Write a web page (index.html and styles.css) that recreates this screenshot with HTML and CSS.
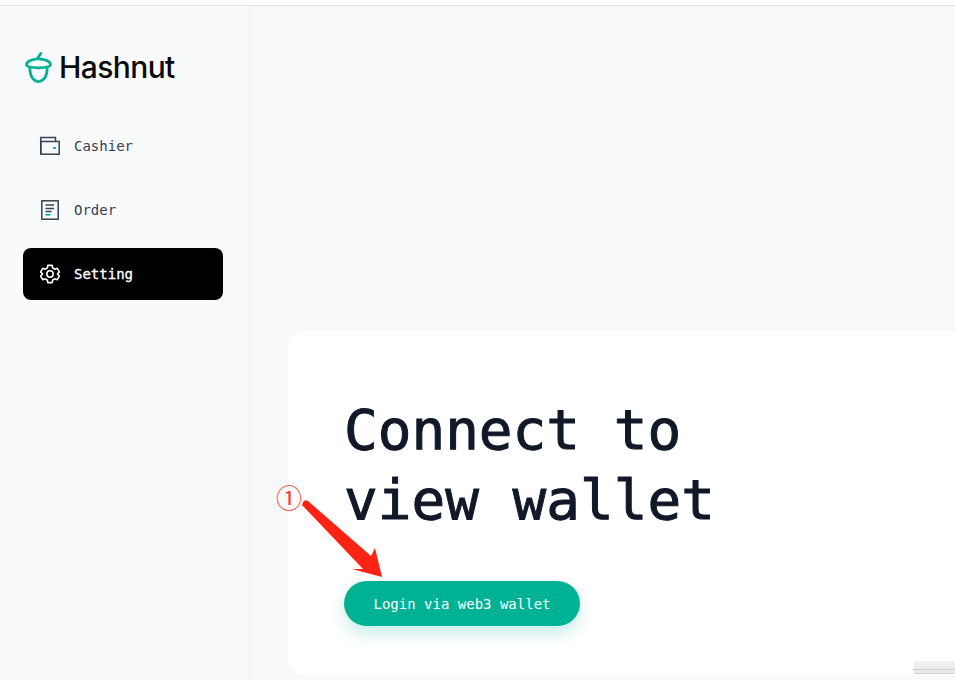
FILE: index.html
```html
<!DOCTYPE html>
<html lang="en">

<head>
    <meta charset="UTF-8">
    <meta name="viewport" content="width=device-width, initial-scale=1.0">
    <title>Hashnut</title>
    <link rel="stylesheet" href="styles.css">
</head>

<body>
    <div class="topbar"></div>
    <div class="app">
        <aside class="sidebar">
            <div class="brand">
                <svg class="brand-icon" width="27" height="33" viewBox="0 0 28 33" fill="none" stroke="#00b294" stroke-width="2.800" stroke-linecap="round" stroke-linejoin="round">
                    <path d="M13 7 L16.500 1.800" />
                    <path d="M14 7.500 C20 7.500 26.500 10 26.500 13.500 C26.500 15.800 22 16.800 14 16.800 C6 16.800 1.500 15.800 1.500 13.500 C1.500 10 8 7.500 14 7.500 Z" />
                    <path d="M5 16.500 C5 23 7 30 14 31.300 C21 30 23 23 23 16.500" />
                </svg>
                <span class="brand-name">Hashnut</span>
            </div>
            <nav class="menu">
                <a class="menu-item">
                    <svg width="20" height="20" viewBox="0 0 20 20" fill="none" stroke="#374151" stroke-width="1.500">
                        <path d="M0.800 17.700 V1.500 H15.500 V5.500" />
                        <rect x="0.800" y="5.500" width="18.400" height="12.700" />
                        <rect x="13" y="11" width="3" height="1.800" fill="#00b294" stroke="none" />
                    </svg>
                    <span>Cashier</span>
                </a>
                <a class="menu-item">
                    <svg width="20" height="20" viewBox="0 0 20 20" fill="none" stroke="#374151" stroke-width="1.500">
                        <rect x="1.800" y="0.800" width="16.400" height="18.400" />
                        <path d="M5.500 5 H14 M5.500 8.500 H14 M5.500 11.500 H11.500" stroke-width="1.300" />
                        <path d="M5.500 14.800 H10.500" stroke="#00b294" stroke-width="1.600" />
                    </svg>
                    <span>Order</span>
                </a>
                <a class="menu-item active">
                    <svg width="20" height="20" viewBox="1 1 22 22" fill="none" stroke="#fff" stroke-width="1.700" stroke-linejoin="round">
                        <path d="M9.600 2.500 H14.400 L15 5.400 L17.200 6.700 L20 5.700 L22.400 9.800 L20.200 11.800 V12.200 L22.400 14.200 L20 18.300 L17.200 17.300 L15 18.600 L14.400 21.500 H9.600 L9 18.600 L6.800 17.300 L4 18.300 L1.600 14.200 L3.800 12.200 V11.800 L1.600 9.800 L4 5.700 L6.800 6.700 L9 5.400 Z" />
                        <circle cx="12" cy="12" r="3.500" />
                    </svg>
                    <span>Setting</span>
                </a>
            </nav>
        </aside>
        <main class="content">
            <section class="card">
                <h1 class="card-title">Connect to<br>view wallet</h1>
                <button class="login-btn">Login via web3 wallet</button>
                <span class="step-mark">①</span>
                <svg class="step-arrow" width="82" height="80" viewBox="0 0 82 80">
                    <path d="M1 3 Q3 0 6 2 L69 57 L73 49 L80 78 L50 70 L61 70 L0 6 Z" fill="#ff2313" />
                </svg>
            </section>
        </main>
    </div>
    <div class="corner-tab"></div>
</body>

</html>
```

FILE: styles.css
```css
html,
body {
    margin: 0;
    height: 100%;
    overflow: hidden;
    background: #fff;
}

body {
    font-family: "DejaVu Sans Mono", "Liberation Mono", monospace;
}

.topbar {
    height: 5px;
    background: #fff;
    border-bottom: 1px solid #e0e2e6;
}

.app {
    display: flex;
    height: 674px;
    background: #f8f9fb;
}

.sidebar {
    flex: none;
    width: 248px;
    padding: 0 25px 0 23px;
    box-sizing: border-box;
    background: #f9fafc;
    box-shadow: 1px 0 6px rgba(230, 232, 236, 0.5);
}

.brand {
    display: flex;
    align-items: center;
    gap: 7px;
    height: 36px;
    margin-top: 43px;
    padding-left: 2px;
}

.brand-name {
    font-family: Inter, "Liberation Sans", sans-serif;
    font-size: 30px;
    font-weight: 550;
    letter-spacing: -0.6px;
    color: #0a0a0a;
}

.menu {
    display: flex;
    flex-direction: column;
    gap: 12px;
    margin-top: 35px;
}

.menu-item {
    display: flex;
    align-items: center;
    gap: 14px;
    height: 52px;
    padding-left: 17px;
    border-radius: 8px;
    font-size: 14px;
    color: #374151;
}

.menu-item.active {
    background: #000;
    color: #fff;
    -webkit-text-stroke: 0.3px #fff;
}

.content {
    flex: 1;
    min-width: 0;
    padding: 325px 0 0 40px;
    overflow: hidden;
}

.card {
    position: relative;
    width: 800px;
    height: 344px;
    padding: 64px 56px 0;
    box-sizing: border-box;
    background: #fff;
    border-radius: 16px;
}

.card-title {
    margin: 0;
    font-size: 56px;
    font-weight: normal;
    line-height: 70px;
    color: #111827;
    -webkit-text-stroke: 1px #111827;
}

.login-btn {
    display: block;
    width: 236px;
    height: 45px;
    margin-top: 46px;
    border: none;
    border-radius: 23px;
    font-family: inherit;
    font-size: 14px;
    color: #fff;
    background: #00b294;
    box-shadow: 0 8px 16px rgba(0, 178, 148, 0.22);
}

.step-mark {
    position: absolute;
    left: -12px;
    top: 149px;
    font-family: "Noto Sans CJK SC", sans-serif;
    font-size: 26px;
    line-height: 34px;
    color: #ff3b30;
}

.step-arrow {
    position: absolute;
    left: 14px;
    top: 168px;
}

.corner-tab {
    position: absolute;
    right: 0;
    top: 661px;
    width: 41px;
    height: 12px;
    border-radius: 3px 0 0 0;
    background: linear-gradient(#f2f2f2, #e6e6e6);
    border-bottom: 1px solid #d0d0d0;
}

.corner-tab::after {
    content: "";
    position: absolute;
    left: -2px;
    right: 0;
    top: 8px;
    height: 1px;
    background: #cfcfcf;
}
```
